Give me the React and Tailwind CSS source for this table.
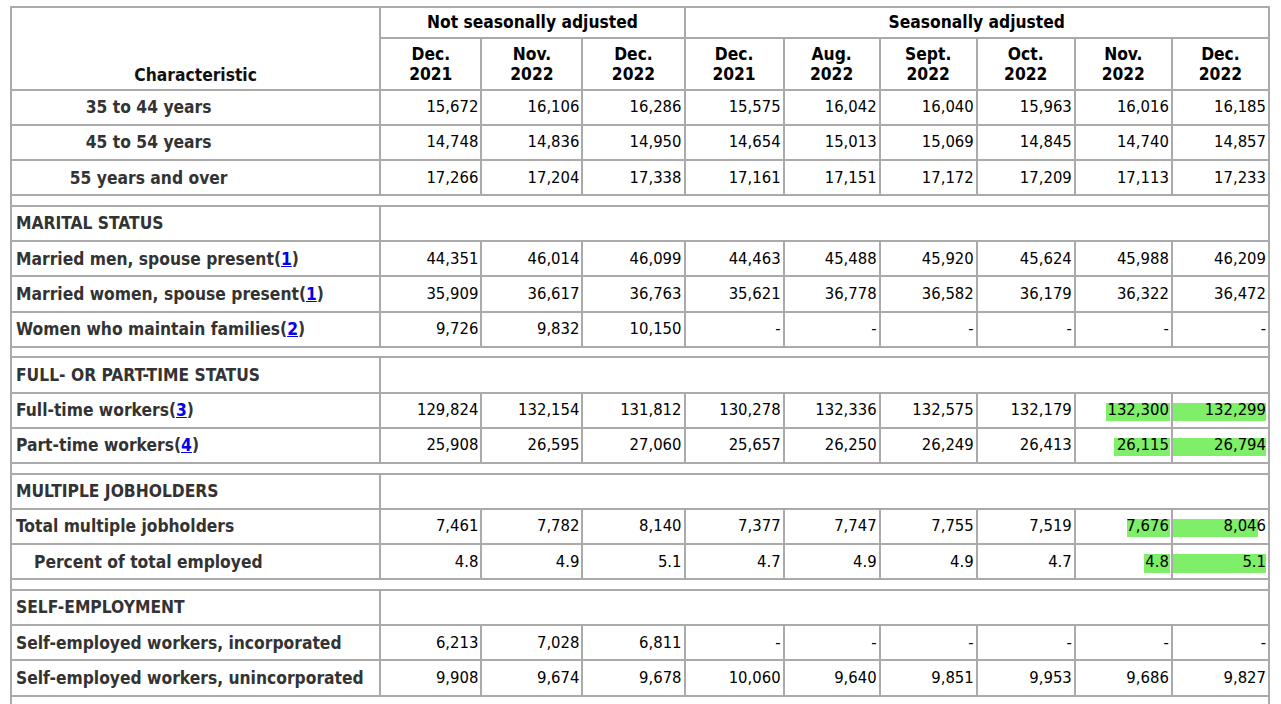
const COLS = [369, 101, 101, 102, 99, 96, 97, 98, 97, 97];

const HEAD = [
  ["Dec.", "2021"],
  ["Nov.", "2022"],
  ["Dec.", "2022"],
  ["Dec.", "2021"],
  ["Aug.", "2022"],
  ["Sept.", "2022"],
  ["Oct.", "2022"],
  ["Nov.", "2022"],
  ["Dec.", "2022"],
];

// hl: highlight boxes for the last two columns [leftOffset, rightOffset]
const SECTIONS = [
  {
    rows: [
      { label: "35 to 44 years", center: true, values: ["15,672", "16,106", "16,286", "15,575", "16,042", "16,040", "15,963", "16,016", "16,185"] },
      { label: "45 to 54 years", center: true, values: ["14,748", "14,836", "14,950", "14,654", "15,013", "15,069", "14,845", "14,740", "14,857"] },
      { label: "55 years and over", center: true, values: ["17,266", "17,204", "17,338", "17,161", "17,151", "17,172", "17,209", "17,113", "17,233"] },
    ],
  },
  {
    title: "MARITAL STATUS",
    rows: [
      { label: "Married men, spouse present", fn: "1", values: ["44,351", "46,014", "46,099", "44,463", "45,488", "45,920", "45,624", "45,988", "46,209"] },
      { label: "Married women, spouse present", fn: "1", values: ["35,909", "36,617", "36,763", "35,621", "36,778", "36,582", "36,179", "36,322", "36,472"] },
      { label: "Women who maintain families", fn: "2", values: ["9,726", "9,832", "10,150", "-", "-", "-", "-", "-", "-"] },
    ],
  },
  {
    title: "FULL- OR PART-TIME STATUS",
    rows: [
      { label: "Full-time workers", fn: "3", values: ["129,824", "132,154", "131,812", "130,278", "132,336", "132,575", "132,179", "132,300", "132,299"], hl: [30, 0] },
      { label: "Part-time workers", fn: "4", values: ["25,908", "26,595", "27,060", "25,657", "26,250", "26,249", "26,413", "26,115", "26,794"], hl: [38, 0] },
    ],
  },
  {
    title: "MULTIPLE JOBHOLDERS",
    rows: [
      { label: "Total multiple jobholders", values: ["7,461", "7,782", "8,140", "7,377", "7,747", "7,755", "7,519", "7,676", "8,046"], hl: [51, 8] },
      { label: "Percent of total employed", indent: true, values: ["4.8", "4.9", "5.1", "4.7", "4.9", "4.9", "4.7", "4.8", "5.1"], hl: [68, 0] },
    ],
  },
  {
    title: "SELF-EMPLOYMENT",
    rows: [
      { label: "Self-employed workers, incorporated", values: ["6,213", "7,028", "6,811", "-", "-", "-", "-", "-", "-"] },
      { label: "Self-employed workers, unincorporated", values: ["9,908", "9,674", "9,678", "10,060", "9,640", "9,851", "9,953", "9,686", "9,827"] },
    ],
  },
];

const cell = "border-2 border-[#aaaaaa]";

function Label({ row }) {
  let cls = `${cell} font-bold text-[17.3px] text-[#333333] whitespace-nowrap`;
  if (row.center) cls += " text-center pr-[94px]";
  else if (row.indent) cls += " pl-[22px]";
  else cls += " pl-[4px]";
  return (
    <td className={cls}>
      {row.label}
      {row.fn && (
        <>
          (<a href="#" className="text-[#0000ee] underline">{row.fn}</a>)
        </>
      )}
    </td>
  );
}

function DataRow({ row }) {
  return (
    <tr className="h-[35.25px]">
      <Label row={row} />
      {row.values.map((v, i) => {
        let box = null;
        if (row.hl && i === 7) {
          box = <span className="absolute top-[9px] h-[18.5px] right-[1px] bg-[#7fee69]" style={{ left: row.hl[0] }} />;
        }
        if (row.hl && i === 8) {
          box = <span className="absolute top-[9px] h-[18.5px] left-0 bg-[#7fee69]" style={{ right: 2 + row.hl[1] }} />;
        }
        return (
          <td key={i} className={`${cell} relative text-right pr-[2px] text-black`}>
            {box}
            <span className="relative">{v}</span>
          </td>
        );
      })}
    </tr>
  );
}

function Spacer() {
  return (
    <tr className="h-[10.5px]">
      <td colSpan={10} className={`${cell} p-0`} />
    </tr>
  );
}

export default function App() {
  return (
    <div className="w-[1281px] h-[704px] overflow-hidden bg-white pt-[6px]">
      <table
        className="table-fixed border-collapse ml-[10px] w-[1260px] text-[16.5px] leading-[20px]"
        style={{ fontFamily: '"DejaVu Sans Condensed", "DejaVu Sans", sans-serif' }}
      >
        <colgroup>
          {COLS.map((w, i) => (
            <col key={i} style={{ width: w }} />
          ))}
        </colgroup>
        <thead>
          <tr className="h-[30.5px]">
            <th rowSpan={2} className={`${cell} align-bottom pb-[4px] font-bold text-[17.3px] text-[#111]`}>
              Characteristic
            </th>
            <th colSpan={3} className={`${cell} font-bold text-[17.3px] text-black`}>
              Not seasonally adjusted
            </th>
            <th colSpan={6} className={`${cell} font-bold text-[17.3px] text-black`}>
              Seasonally adjusted
            </th>
          </tr>
          <tr className="h-[52px]">
            {HEAD.map(([m, y], i) => (
              <th key={i} className={`${cell} font-bold text-[17.3px] text-black`}>
                <div>{m}</div>
                <div>{y}</div>
              </th>
            ))}
          </tr>
        </thead>
        <tbody>
          {SECTIONS.map((s, si) => (
            <Section key={si} s={s} first={si === 0} />
          ))}
          <Spacer />
          <Spacer />
        </tbody>
      </table>
    </div>
  );
}

function Section({ s, first }) {
  return (
    <>
      {!first && <Spacer />}
      {s.title && (
        <tr className="h-[35.25px]">
          <td className={`${cell} pl-[4px] font-bold text-[17.3px] text-[#333333] whitespace-nowrap`}>{s.title}</td>
          <td colSpan={9} className={cell} />
        </tr>
      )}
      {s.rows.map((r, i) => (
        <DataRow key={i} row={r} />
      ))}
    </>
  );
}
